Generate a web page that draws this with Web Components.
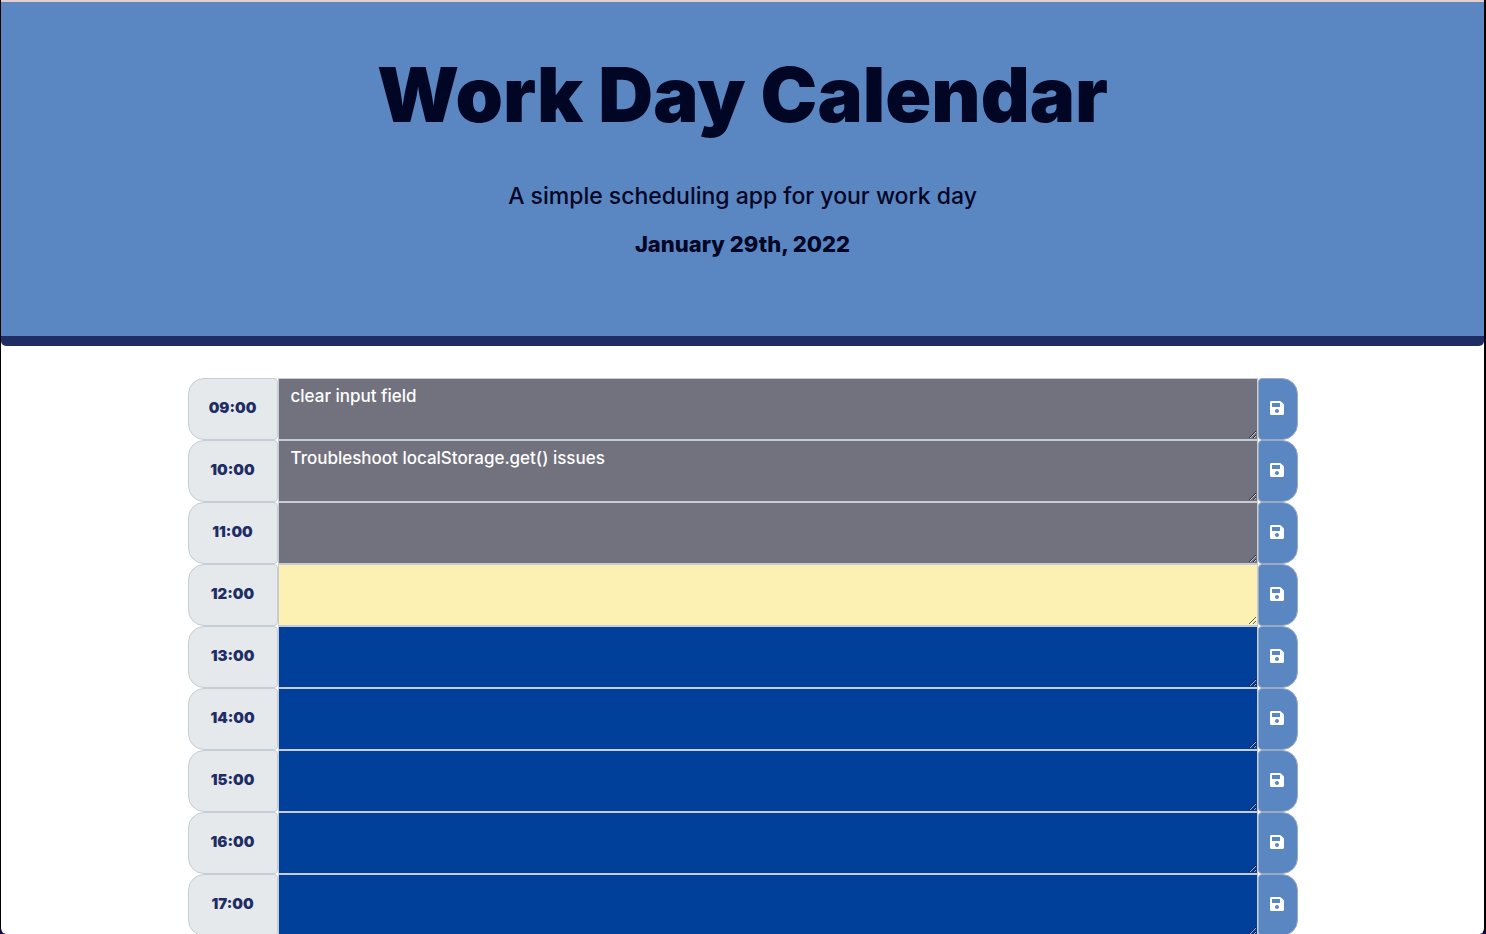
<!DOCTYPE html>
<html lang="en">
<head>
<meta charset="utf-8">
<meta name="viewport" content="width=device-width, initial-scale=1">
<title>Work Day Calendar</title>
<style>
  html { background: #14005a; }
  body { margin: 0; font: 500 17px/24px Inter, "Open Sans", sans-serif; color: #000624; }
</style>
</head>
<body>
<planner-app></planner-app>

<template id="planner-app">
  <style>
    :host {
      display: block; box-sizing: border-box; height: 100vh; overflow: hidden;
      background: #fff; border: solid #000; border-width: 0 2px 0 1px;
      border-radius: 0 0 6px 6px;
    }
    main { box-sizing: border-box; max-width: 1140px; margin: 32px auto 0; padding: 0 15px; }
  </style>
  <planner-header>
    Work Day Calendar
    <span slot="lead">A simple scheduling app for your work day</span>
    <span slot="date">January 29th, 2022</span>
  </planner-header>
  <main>
    <time-block hour="09:00" state="past">clear input field</time-block>
    <time-block hour="10:00" state="past">Troubleshoot localStorage.get() issues</time-block>
    <time-block hour="11:00" state="past"></time-block>
    <time-block hour="12:00" state="present"></time-block>
    <time-block hour="13:00" state="future"></time-block>
    <time-block hour="14:00" state="future"></time-block>
    <time-block hour="15:00" state="future"></time-block>
    <time-block hour="16:00" state="future"></time-block>
    <time-block hour="17:00" state="future"></time-block>
  </main>
</template>

<template id="planner-header">
  <style>
    :host { display: block; }
    header {
      padding: 48px 32px 74px; text-align: center; background: #5a87c2;
      border-top: 2px solid #e6cdcb; border-bottom: 10px solid #1f2d64;
      border-radius: 0 0 5px 5px;
    }
    h1 { margin: 0 0 40px; font-size: 76px; line-height: 88px; font-weight: 900; }
    p { margin: 0 0 12px; font-size: 23px; line-height: 36px; }
    .date { margin: 0; font-size: 22px; font-weight: 800; }
  </style>
  <header>
    <h1><slot></slot></h1>
    <p><slot name="lead"></slot></p>
    <p class="date"><slot name="date"></slot></p>
  </header>
</template>

<template id="time-block">
  <style>
    :host { display: grid; grid-template-columns: 90px 1fr 40px; height: 62px; --fill: #003f9a; --ink: #fff; }
    :host([state="past"]) { --fill: #72727e; }
    :host([state="present"]) { --fill: #fcf0b3; --ink: #000624; }
    label, textarea, button { box-sizing: border-box; margin: 0; border: 1px solid #c6cdd4; }
    label {
      display: flex; align-items: center; justify-content: center; padding-bottom: 2px;
      background: #e5e9ec; color: #1f2d64; font-size: 15px; font-weight: 900; border-radius: 16px 4px 4px 16px;
    }
    textarea {
      display: block; width: 100%; height: 100%; padding: 5px 12px;
      font: inherit; color: var(--ink); background: var(--fill); resize: vertical; outline: 0;
      border-radius: 0; overflow: hidden;
    }
    button {
      display: flex; align-items: center; justify-content: center; padding: 0 2px 2px 0;
      background: #5a87c2; border-color: #9ba9c2; color: #fff; border-radius: 4px 16px 16px 4px; cursor: pointer;
    }
    svg { display: block; width: 14px; height: 16px; fill: currentColor; }
  </style>
  <label for="task"></label>
  <textarea id="task" spellcheck="false"></textarea>
  <button type="button">
    <svg viewBox="0 0 448 512" aria-hidden="true"><path d="M433.941 129.941l-83.882-83.882A48 48 0 0 0 316.118 32H48C21.49 32 0 53.49 0 80v352c0 26.51 21.49 48 48 48h352c26.51 0 48-21.49 48-48V163.882a48 48 0 0 0-14.059-33.941zM224 416c-35.346 0-64-28.654-64-64 0-35.346 28.654-64 64-64s64 28.654 64 64c0 35.346-28.654 64-64 64zm96-304.52V212c0 6.627-5.373 12-12 12H76c-6.627 0-12-5.373-12-12V108c0-6.627 5.373-12 12-12h228.52c3.183 0 6.235 1.264 8.485 3.515l3.48 3.48A11.996 11.996 0 0 1 320 111.48z"/></svg>
  </button>
</template>

<script>
  class TemplateElement extends HTMLElement {
    constructor() {
      super();
      const template = document.getElementById(this.localName);
      this.attachShadow({ mode: "open" }).append(template.content.cloneNode(true));
    }
  }
  class PlannerHeader extends TemplateElement {}
  class TimeBlock extends TemplateElement {
    connectedCallback() {
      const hour = this.getAttribute("hour");
      this.shadowRoot.querySelector("label").textContent = hour;
      this.shadowRoot.querySelector("textarea").value = this.textContent.trim();
      this.shadowRoot.querySelector("button").setAttribute("aria-label", "Save " + hour);
    }
  }
  class PlannerApp extends TemplateElement {}
  customElements.define("planner-header", PlannerHeader);
  customElements.define("time-block", TimeBlock);
  customElements.define("planner-app", PlannerApp);
</script>
</body>
</html>
